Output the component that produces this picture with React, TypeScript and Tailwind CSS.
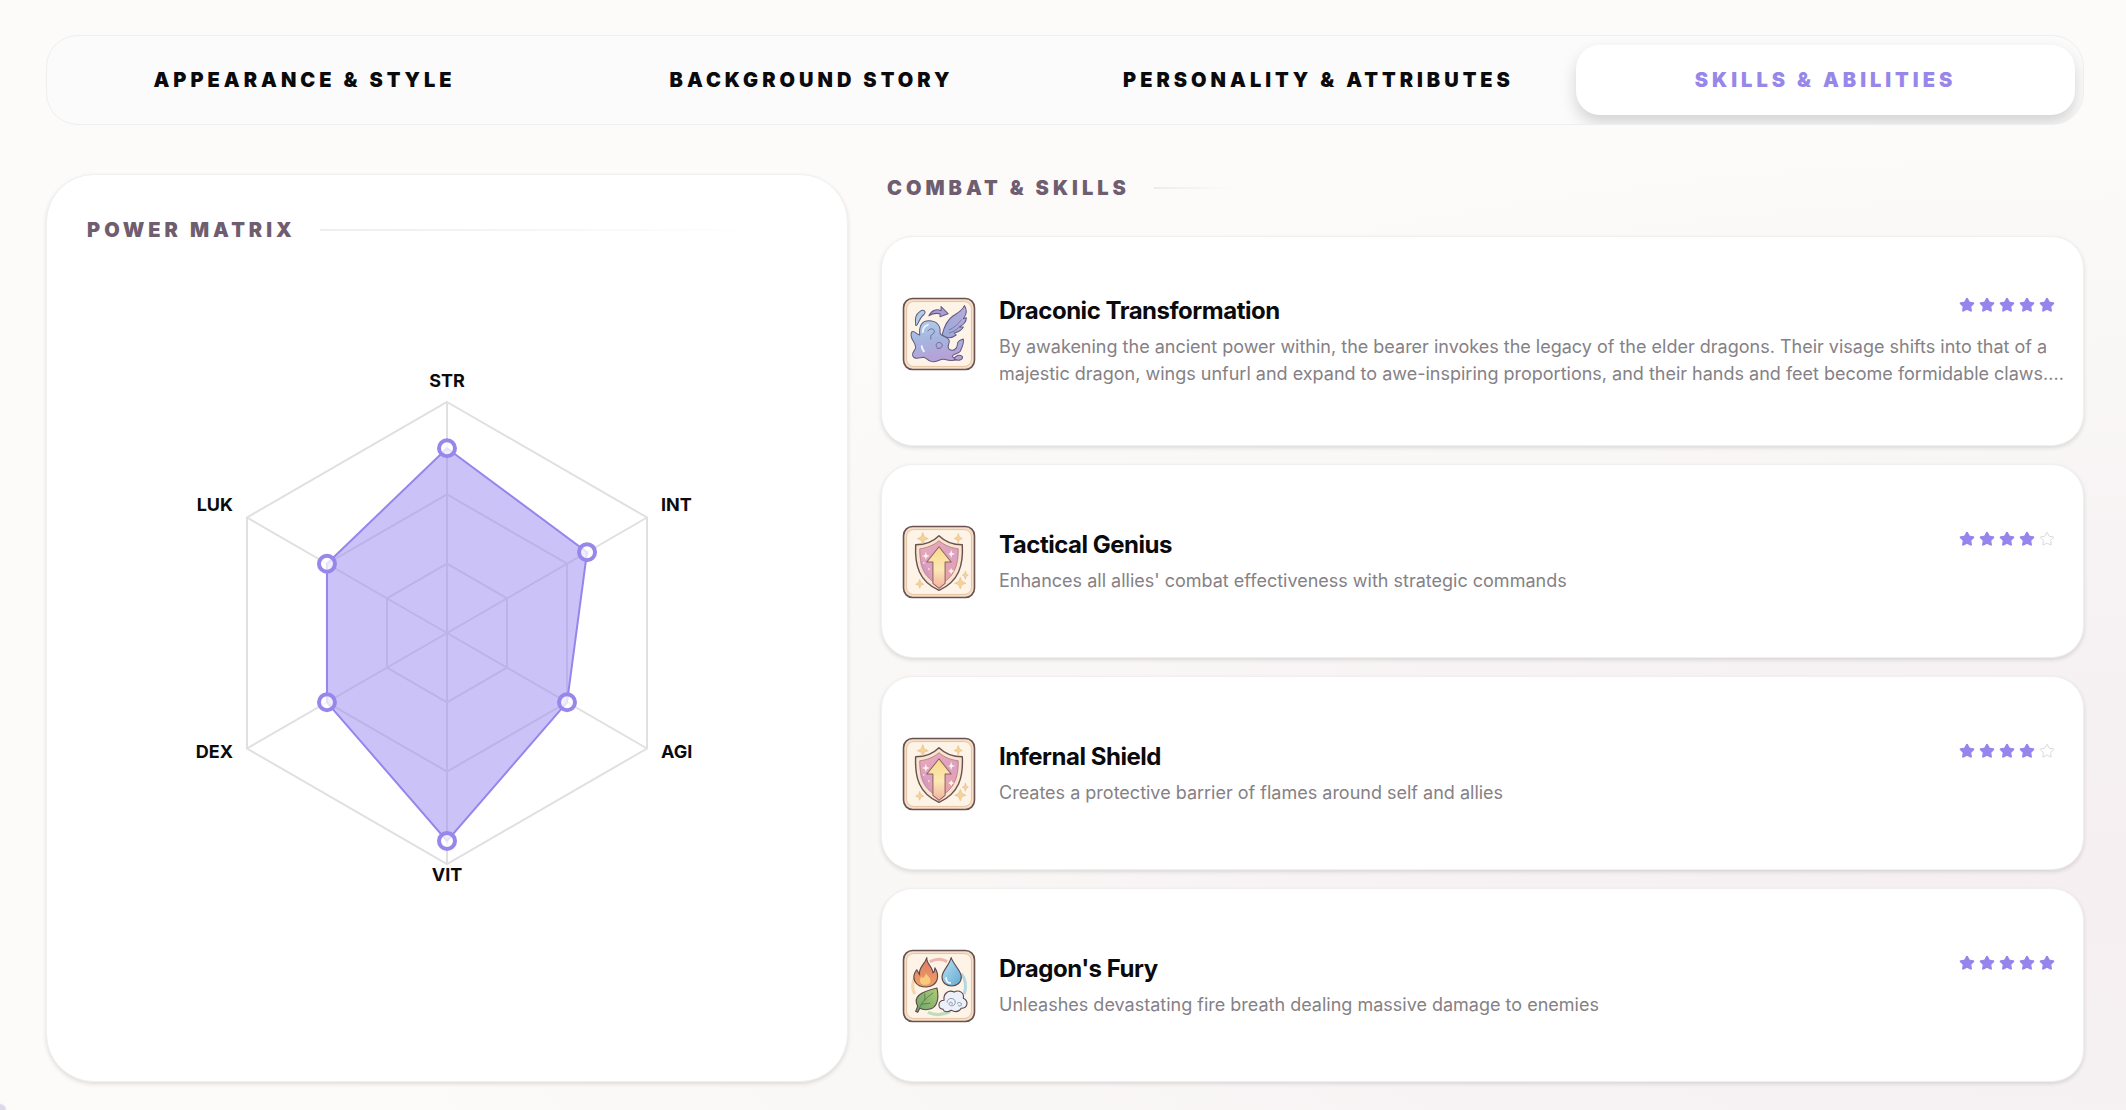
import { useState } from "react";
import { Star } from "lucide-react";

const TABS = [
  "Appearance & Style",
  "Background Story",
  "Personality & Attributes",
  "Skills & Abilities",
];

const STATS = [
  { label: "STR", value: 0.8 },
  { label: "INT", value: 0.7 },
  { label: "AGI", value: 0.6 },
  { label: "VIT", value: 0.9 },
  { label: "DEX", value: 0.6 },
  { label: "LUK", value: 0.6 },
];

const SKILLS = [
  {
    name: "Draconic Transformation",
    text: "By awakening the ancient power within, the bearer invokes the legacy of the elder dragons. Their visage shifts into that of a majestic dragon, wings unfurl and expand to awe-inspiring proportions, and their hands and feet become formidable claws....",
    stars: 5,
    icon: "spirit",
  },
  {
    name: "Tactical Genius",
    text: "Enhances all allies' combat effectiveness with strategic commands",
    stars: 4,
    icon: "shield",
  },
  {
    name: "Infernal Shield",
    text: "Creates a protective barrier of flames around self and allies",
    stars: 4,
    icon: "shield",
  },
  {
    name: "Dragon's Fury",
    text: "Unleashes devastating fire breath dealing massive damage to enemies",
    stars: 5,
    icon: "elements",
  },
];

// Cream tile with the brown double frame, shared by all skill icons
const IconFrame = ({ children }: { children: React.ReactNode }) => (
  <svg viewBox="-0.5 -0.5 73 73" className="size-[74px] shrink-0" aria-hidden>
    <rect x="1" y="1" width="70" height="70" rx="9" fill="#f5dfc6" stroke="#6a5252" strokeWidth="1.6" />
    <rect x="4" y="4" width="64" height="64" rx="7" fill="#fdf3e6" stroke="#e2ba98" strokeWidth="0.8" />
    {children}
  </svg>
);

const SpiritIcon = () => (
  <IconFrame>
    <defs>
      <linearGradient id="spirit-body" x1="0" y1="0" x2="0.2" y2="1">
        <stop offset="0" stopColor="#b3cdea" />
        <stop offset="0.5" stopColor="#a5b5df" />
        <stop offset="1" stopColor="#b7a0d5" />
      </linearGradient>
      <linearGradient id="spirit-wing" x1="1" y1="0" x2="0" y2="1">
        <stop offset="0" stopColor="#b8acdd" />
        <stop offset="1" stopColor="#98a8d8" />
      </linearGradient>
    </defs>
    <g stroke="#615a82" strokeWidth="1" strokeLinejoin="round" strokeLinecap="round">
      <path
        d="M39 37C41 29 44 22 50 18C55 15 59 13 61 8C64 12 63 17 60 21L63 20C63 24 60 27 56 29L60 29C58 33 55 34 51 35L53 37C49 40 44 41 39 37Z"
        fill="url(#spirit-wing)"
      />
      <path d="M46 32C51 30 55 26 58 22M46 35C50 34 53 32 55 30" fill="none" strokeWidth="0.6" />
      <path
        d="M9 34C12 32 14 37 17 37C16 28 19 23 26 23C34 23 38 28 37 35C38 39 44 38 46 42C47 46 43 48 46 51C50 54 54 50 54 47C54 43 57 42 60 41C61 46 58 50 57 53C55 56 50 55 49 58C50 60 53 60 55 60C51 64 45 62 41 61C37 60 33 65 28 63C24 62 24 59 20 59C15 60 11 61 10 57C9 54 13 52 13 49C13 43 6 41 9 34Z"
        fill="url(#spirit-body)"
      />
      <path d="M25 33C29 28 34 33 30 36C27 37 28 39 28 41M34 49C31 46 36 42 39 46C40 49 37 51 34 50" fill="none" strokeWidth="0.8" />
      <path d="M13 27C12 21 14 16 17 14C21 11 24 14 21 17C18 19 17 22 15 26C14 28 13 28 13 27Z" fill="#b0cde6" />
      <path d="M26 18C29 12 34 11 38 13L38 9L45 16L37 19L37 16C32 15 29 16 26 18Z" fill="#ab9dd6" />
      <path d="M51 61C52 57 56 56 59 58C60 61 56 63 51 61Z" fill="#b9a3d6" />
    </g>
    <path d="M20 34C20 30 22 28 25 27M19 48C19 50 20 51 21 53" fill="none" stroke="#e5f3ff" strokeWidth="2" strokeLinecap="round" />
  </IconFrame>
);

const ShieldIcon = () => (
  <IconFrame>
    <defs>
      <linearGradient id="shield-face" x1="0" y1="0" x2="0.3" y2="1">
        <stop offset="0" stopColor="#eaabb4" />
        <stop offset="0.55" stopColor="#dba0c3" />
        <stop offset="1" stopColor="#eda3a6" />
      </linearGradient>
      <linearGradient id="shield-arrow" x1="0" y1="0" x2="0" y2="1">
        <stop offset="0" stopColor="#f8d98a" />
        <stop offset="0.55" stopColor="#fbe9b4" />
        <stop offset="1" stopColor="#f4b0a0" />
      </linearGradient>
    </defs>
    <path d="M36 10c6 6 14 9 23 9 1 20-3 36-23 45C16 55 12 39 13 19c9 0 17-3 23-9z" fill="#f9e4cf" stroke="#6a5252" strokeWidth="1.4" strokeLinejoin="round" />
    <path d="M36 15c6 5 12 7 19 8 0 17-4 28-19 36-15-8-19-19-19-36 7-1 13-3 19-8z" fill="url(#shield-face)" stroke="#ad7880" strokeWidth="0.8" />
    <path d="M17 35c5 4 10 10 14 21-9-5-13-12-14-21z" fill="#c792c4" opacity="0.4" />
    <path d="M36 21l12 15h-6v21l-6 5-6-5V36h-6z" fill="url(#shield-arrow)" stroke="#8d6063" strokeWidth="1" strokeLinejoin="round" />
    <g fill="#fff3e8">
      <path d="M23 26l1 3 3 1-3 1-1 3-1-3-3-1 3-1zM48 24l1 3 3 1-3 1-1 3-1-3-2-1 2-1zM48 42l1 2 2 1-2 1-1 2-1-2-2-1 2-1z" />
      <circle cx="26" cy="43" r="0.8" />
      <circle cx="21" cy="37" r="0.8" />
    </g>
    <g fill="#f6d394" stroke="#d6ab78" strokeWidth="0.4">
      <path d="M20 7l1.5 4 4 2-4 1.5-1.5 4-1.5-4-4-1.5 4-2zM55 8l1 3 3 2-3 1-1 3-1-3-3-1 3-2zM17 53l1 3 3 2-3 1-1 3-1-3-3-1 3-2zM57 51l1.5 4 4 2-4 1.5-1.5 4-1.5-4-4-1.5 4-2zM62 45l1 3 2 1-2 1-1 3-1-3-2-1 2-1z" />
    </g>
  </IconFrame>
);

const ElementsIcon = () => (
  <IconFrame>
    <defs>
      <linearGradient id="el-fire" x1="0" y1="0" x2="0" y2="1">
        <stop offset="0" stopColor="#df7a62" />
        <stop offset="1" stopColor="#f0a068" />
      </linearGradient>
      <linearGradient id="el-water" x1="0" y1="0" x2="1" y2="1">
        <stop offset="0" stopColor="#bde4f4" />
        <stop offset="1" stopColor="#62a8d2" />
      </linearGradient>
      <linearGradient id="el-leaf" x1="1" y1="0" x2="0" y2="1">
        <stop offset="0" stopColor="#afca78" />
        <stop offset="1" stopColor="#6ba464" />
      </linearGradient>
    </defs>
    <g fill="none" strokeWidth="3">
      <path d="M27 12c6-3 12-3 17 0" stroke="#efb5aa" />
      <path d="M58 24c5 6 5 13 3 20" stroke="#b0d9e3" />
      <path d="M47 61c-7 4-15 4-22 1" stroke="#bfdcbb" />
      <path d="M12 44c-3-6-2-13 1-18" stroke="#f4d5aa" />
    </g>
    <g stroke="#5b484c" strokeWidth="1.1" strokeLinejoin="round" strokeLinecap="round">
      <path d="M24 8C23 14 30 17 30 23C32 22 32 20 32 18C37 26 35 36 24 37C12 37 8 28 14 20L17 25C15 18 22 15 24 8Z" fill="url(#el-fire)" />
      <path d="M23 21C23 26 29 27 28 32C27 36 18 37 17 32C16 29 18 27 19 26L20 28C22 26 23 24 23 21Z" fill="#f8cb7d" stroke="#e28a61" strokeWidth="0.7" />
      <path d="M48 8c3 8 10 13 10 19 0 12-19 12-19 0 0-6 7-11 9-19z" fill="url(#el-water)" />
      <path d="M43 28c0 3 2 5 4 5" fill="none" stroke="#eefaff" strokeWidth="1.8" />
      <path d="M34 38C36 47 35 58 26 59C22 60 19 59 17 58L15 62L13 61L15 56C10 47 17 42 34 38Z" fill="url(#el-leaf)" />
      <path d="M30 43c-6 4-11 9-13 14M22 50v-6M19 54l8-1" fill="none" stroke="#4d7650" strokeWidth="0.8" />
      <path d="M40 59c-6-1-5-9 1-9-1-6 4-11 10-8 5-3 10 1 9 6 6 3 4 10-2 10-3 5-8 3-10 2-3 2-7 2-8-1z" fill="#ecf0f9" />
      <path d="M44 52c0-5 8-5 8 0 0 5-7 4-6 1 1-2 4-1 3 1M54 53c2-2 5 0 4 2-1 1-3 1-3 0" fill="none" stroke="#8087a6" strokeWidth="0.9" />
    </g>
  </IconFrame>
);

const SKILL_ICONS: Record<string, React.ReactNode> = {
  spirit: <SpiritIcon />,
  shield: <ShieldIcon />,
  elements: <ElementsIcon />,
};

// ---- Radar chart ----
const RADIUS = 231;
const CX = 280;
const CY = 270;

const point = (i: number, scale: number) => {
  const angle = (Math.PI / 3) * i - Math.PI / 2;
  return [CX + Math.cos(angle) * RADIUS * scale, CY + Math.sin(angle) * RADIUS * scale];
};

const ring = (scale: number) => STATS.map((_, i) => point(i, scale).join(",")).join(" ");

const LABELS = [
  { x: 280, y: 24, anchor: "middle" },
  { x: 494, y: 148, anchor: "start" },
  { x: 494, y: 395, anchor: "start" },
  { x: 280, y: 518, anchor: "middle" },
  { x: 66, y: 395, anchor: "end" },
  { x: 66, y: 148, anchor: "end" },
] as const;

const PowerRadar = () => (
  <svg viewBox="0 0 560 540" className="w-full max-w-[560px]" role="img" aria-label="Power matrix">
    <g fill="none" stroke="#e0dfe1" strokeWidth="2">
      {[0.3, 0.6, 1].map((s) => (
        <polygon key={s} points={ring(s)} />
      ))}
      {STATS.map((s, i) => {
        const [x, y] = point(i, 1);
        return <line key={s.label} x1={CX} y1={CY} x2={x} y2={y} />;
      })}
    </g>
    <polygon
      points={STATS.map((s, i) => point(i, s.value).join(",")).join(" ")}
      fill="#9787ef"
      fillOpacity="0.5"
      stroke="#9585ec"
      strokeWidth="2"
    />
    {STATS.map((s, i) => {
      const [x, y] = point(i, s.value);
      return (
        <circle key={s.label} cx={x} cy={y} r="8" fill="#fff" fillOpacity="0.75" stroke="#9787ea" strokeWidth="4" />
      );
    })}
    {STATS.map((s, i) => (
      <text
        key={s.label}
        x={LABELS[i].x}
        y={LABELS[i].y}
        textAnchor={LABELS[i].anchor}
        className="fill-[#0b0b0d] text-[18px] font-bold"
      >
        {s.label}
      </text>
    ))}
  </svg>
);

const SectionTitle = ({ children, lineClass }: { children: string; lineClass: string }) => (
  <div className="flex items-center gap-6">
    <h2 className="text-xl leading-7 font-black tracking-[0.2em] whitespace-nowrap text-[#6f5d70] uppercase">
      {children}
    </h2>
    <div className={lineClass} />
  </div>
);

const SkillCard = ({ skill }: { skill: (typeof SKILLS)[number] }) => (
  <li className="flex flex-auto items-center rounded-[32px] border border-[#f1efef] bg-white pt-[26px] pr-4 pb-6 pl-5 shadow-[0_2px_4px_rgba(0,0,0,0.12)]">
    <div className="flex w-full items-start gap-[23px]">
      {SKILL_ICONS[skill.icon]}
      <div className="flex min-h-[74px] min-w-0 flex-1 flex-col justify-center">
        <div className="flex items-start justify-between pr-3">
          <h3 className="text-2xl leading-7 font-bold tracking-[-0.02em] text-[#0b0b0d]">{skill.name}</h3>
          <div className="flex gap-1" role="img" aria-label={`${skill.stars} of 5 stars`}>
            {[1, 2, 3, 4, 5].map((n) => (
              <Star
                key={n}
                size={16}
                strokeWidth={n <= skill.stars ? 2 : 1.5}
                className={n <= skill.stars ? "fill-[#9585ec] text-[#9585ec]" : "text-[#d9d8dc]"}
              />
            ))}
          </div>
        </div>
        <p className="mt-2 text-lg leading-[27px] text-[#858186]">{skill.text}</p>
      </div>
    </div>
  </li>
);

export default function App() {
  const [active, setActive] = useState(3);

  return (
    <div className="flex min-h-screen flex-col bg-[#fcfbf9] bg-[radial-gradient(circle_at_0_100%,#dcd8ea_0,#dcd8ea_5px,transparent_7px),radial-gradient(ellipse_at_100%_80%,#f5eff2_0%,#f6f1f3_20%,#f9f6f6_38%,transparent_62%)] pt-[35px] pr-[42px] pb-7 pl-[46px] font-['Inter',sans-serif]">
      <nav className="grid grid-cols-4 gap-2 overflow-hidden rounded-[32px] border border-[#efeeef] bg-[#fbfbfc] px-2 py-[9px]">
        {TABS.map((tab, i) => (
          <button
            key={tab}
            type="button"
            onClick={() => setActive(i)}
            className={
              i === active
                ? "rounded-3xl bg-white py-5 text-xl leading-[30px] font-black tracking-[0.2em] text-[#9787ea] uppercase shadow-[0_8px_16px_rgba(0,0,0,0.16)]"
                : "rounded-3xl py-5 text-xl leading-[30px] font-black tracking-[0.2em] text-[#0b0b0d] uppercase"
            }
          >
            {tab}
          </button>
        ))}
      </nav>

      <main className="mt-[49px] grid flex-1 grid-cols-[2fr_3fr] gap-[33px]">
        <section className="flex flex-col rounded-[48px] border border-[#f1efef] bg-white px-10 pt-[41px] pb-[59px] shadow-[0_2px_4px_rgba(0,0,0,0.12)]">
          <SectionTitle lineClass="h-0.5 flex-1 bg-linear-to-r from-[#efedef] to-transparent to-90%">Power Matrix</SectionTitle>
          <div className="flex flex-1 items-center justify-center">
            <PowerRadar />
          </div>
        </section>

        <section className="flex flex-col">
          <div className="mb-[34px] pl-1.5">
            <SectionTitle lineClass="h-0.5 w-20 bg-linear-to-r from-[#eeecea] to-transparent">Combat & Skills</SectionTitle>
          </div>
          <ul className="flex flex-1 flex-col gap-[18px]">
            {SKILLS.map((skill) => (
              <SkillCard key={skill.name} skill={skill} />
            ))}
          </ul>
        </section>
      </main>
    </div>
  );
}
